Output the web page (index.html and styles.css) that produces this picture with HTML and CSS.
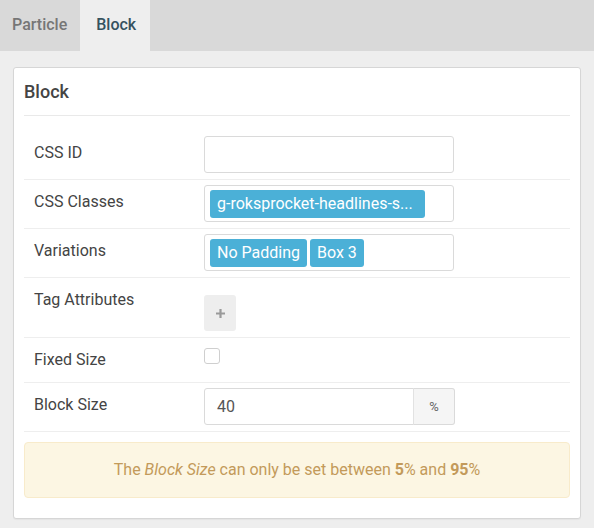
FILE: index.html
```html
<!DOCTYPE html>
<html>
<head>
<meta charset="utf-8">
<link rel="stylesheet" href="styles.css">
</head>
<body>
<div class="tabs">
  <div class="tab">Particle</div>
  <div class="tab active">Block</div>
</div>
<div class="main">
  <div class="card">
    <h2 class="card-title">Block</h2>
    <div class="fields">
      <div class="row">
        <div class="label">CSS ID</div>
        <div class="control"><div class="input"></div></div>
      </div>
      <div class="row">
        <div class="label">CSS Classes</div>
        <div class="control"><div class="input tags"><span class="tag tag-long">g-roksprocket-headlines-s...</span></div></div>
      </div>
      <div class="row">
        <div class="label">Variations</div>
        <div class="control"><div class="input tags"><span class="tag">No Padding</span><span class="tag">Box 3</span></div></div>
      </div>
      <div class="row">
        <div class="label">Tag Attributes</div>
        <div class="control"><div class="add-btn"><svg width="9" height="9" viewBox="0 0 9 9"><path d="M3.4 0h2.2v3.4H9v2.2H5.6V9H3.4V5.6H0V3.4h3.4z" fill="#9a9a9a"/></svg></div></div>
      </div>
      <div class="row">
        <div class="label">Fixed Size</div>
        <div class="control"><div class="checkbox"></div></div>
      </div>
      <div class="row">
        <div class="label">Block Size</div>
        <div class="control">
          <div class="group"><div class="input num">40</div><div class="addon">%</div></div>
        </div>
      </div>
    </div>
    <div class="alert">The <em>Block Size</em> can only be set between <strong>5</strong>% and <strong>95</strong>%</div>
  </div>
</div>
</body>
</html>
```

FILE: styles.css
```css
* { box-sizing: border-box; }
html, body { margin: 0; padding: 0; }
body {
  background: #eeeeee;
  font-family: Roboto, "Liberation Sans", sans-serif;
  font-size: 16px;
  color: #444;
  width: 594px;
  height: 528px;
  overflow: hidden;
}
.tabs {
  display: flex;
  height: 51px;
  background: #d9d9d9;
}
.tab {
  padding: 0 13px 0 12px;
  line-height: 49px;
  font-size: 16px;
  font-weight: 500;
  color: #767676;
}
.tab.active {
  background: #eeeeee;
  color: #35525f;
  padding: 0 14px 0 16px;
}
.main {
  padding: 16px 13px 0 13px;
}
.card {
  background: #fff;
  border: 1px solid #d6d6d6;
  border-radius: 3px;
  padding: 0 10px 10px 10px;
  box-shadow: 0 1px 1px rgba(0,0,0,0.04);
}
.card-title {
  margin: 0;
  height: 48px;
  line-height: 47px;
  font-size: 18px;
  font-weight: 500;
  color: #444;
  border-bottom: 1px solid #e9e9e9;
}
.fields {
  padding-top: 15px;
}
.row {
  display: flex;
  align-items: flex-start;
  padding: 5px 0 6px 10px;
  border-bottom: 1px solid #eeeeee;
}
.label {
  width: 170px;
  flex: none;
  line-height: 33px;
  color: #444;
}
.control { flex: 1; }
.input {
  width: 250px;
  height: 37px;
  border: 1px solid #dadada;
  border-radius: 3px;
  background: #fff;
}
.tags {
  display: flex;
  gap: 3px;
  padding: 4px 5px;
}
.tag {
  display: block;
  height: 28px;
  line-height: 28px;
  padding: 0 7px;
  background: #4bb0d7;
  color: #fff;
  border-radius: 3px;
  white-space: nowrap;
}
.tag-long {
  width: 215px;
}
.add-btn {
  margin-top: 12px;
  width: 32px;
  height: 36px;
  background: #eeeeee;
  border-radius: 3px;
  display: flex;
  align-items: center;
  justify-content: center;
}
.checkbox {
  margin-top: 5px;
  width: 16px;
  height: 16px;
  border: 1px solid #cfcfcf;
  border-radius: 3px;
  background: #fff;
}
.group {
  display: flex;
  width: 252px;
}
.input.num {
  width: 210px;
  border-radius: 3px 0 0 3px;
  padding-left: 12px;
  line-height: 35px;
  color: #555;
}
.addon {
  width: 42px;
  height: 37px;
  border: 1px solid #dadada;
  border-left: 1px solid #e2e2e2;
  border-radius: 0 3px 3px 0;
  background: #f5f5f5;
  color: #666;
  font-size: 13px;
  line-height: 35px;
  text-align: center;
  margin-left: -1px;
}
.alert {
  margin: 10px 0 10px 0;
  height: 56px;
  border: 1px solid #f8ebcb;
  border-radius: 4px;
  background: #fcf6e3;
  color: #c39a5a;
  text-align: center;
  line-height: 54px;
}
.alert strong { font-weight: 700; }
```
